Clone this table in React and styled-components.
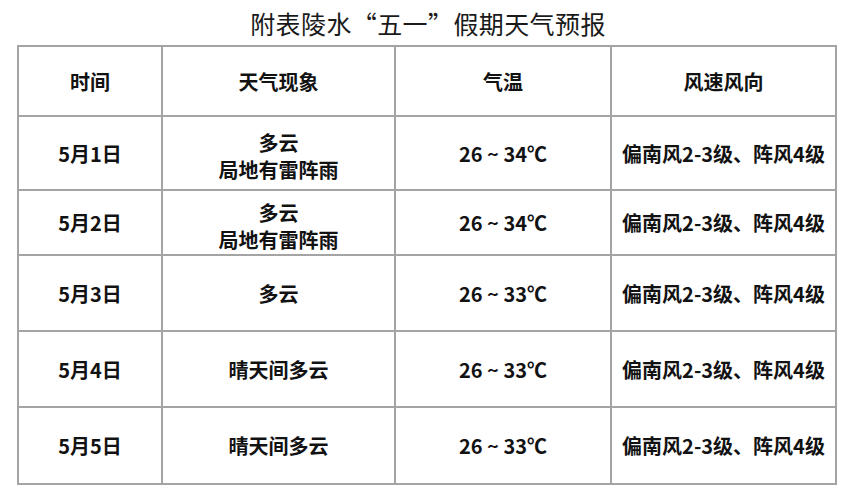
import React from "react";
import styled, { createGlobalStyle } from "styled-components";

const GlobalStyle = createGlobalStyle`
  html, body {
    margin: 0;
    padding: 0;
    background: #ffffff;
  }
  body {
    font-family: "Noto Sans CJK SC", "Noto Sans", sans-serif;
    color: #141414;
  }
`;

const rows = [
  { date: "5月1日", weather: ["多云", "局地有雷阵雨"], temp: "26 ~ 34℃", height: 74 },
  { date: "5月2日", weather: ["多云", "局地有雷阵雨"], temp: "26 ~ 34℃", height: 65 },
  { date: "5月3日", weather: ["多云"], temp: "26 ~ 33℃", height: 76 },
  { date: "5月4日", weather: ["晴天间多云"], temp: "26 ~ 33℃", height: 76 },
  { date: "5月5日", weather: ["晴天间多云"], temp: "26 ~ 33℃", height: 77 },
];

const App = () => {
  return (
    <Page>
      <GlobalStyle />
      <Title>附表陵水“五一”假期天气预报</Title>
      <Table>
        <colgroup>
          <col style={{ width: 144 }} />
          <col style={{ width: 233 }} />
          <col style={{ width: 216 }} />
          <col style={{ width: 225 }} />
        </colgroup>
        <tbody>
          <Row $h={70}>
            <Cell>时间</Cell>
            <Cell>天气现象</Cell>
            <Cell>气温</Cell>
            <Cell>风速风向</Cell>
          </Row>
          {rows.map((r) => (
            <Row key={r.date} $h={r.height}>
              <Cell>{r.date}</Cell>
              <Cell $multi={r.weather.length > 1}>
                {r.weather.map((w) => (
                  <Line key={w}>{w}</Line>
                ))}
              </Cell>
              <Cell>{r.temp}</Cell>
              <Cell>偏南风2-3级、阵风4级</Cell>
            </Row>
          ))}
        </tbody>
      </Table>
    </Page>
  );
};

export default App;

const Page = styled.div`
  width: 854px;
  height: 500px;
  background: #ffffff;
  overflow: hidden;
`;

const Title = styled.div`
  height: 45px;
  display: flex;
  align-items: center;
  justify-content: center;
  padding-left: 2px;
  font-size: 25px;
  font-weight: 400;
  color: #1a1a1a;
  letter-spacing: 0.4px;
`;

const Table = styled.table`
  margin-left: 17px;
  width: 818px;
  border-collapse: collapse;
  table-layout: fixed;
`;

const Row = styled.tr`
  height: ${(p) => p.$h}px;
`;

const Cell = styled.td`
  border: 2px solid #a4a4a4;
  padding: ${(p) => (p.$multi ? "6px 0 0" : "0")};
  text-align: center;
  vertical-align: middle;
  font-size: 20px;
  font-weight: 700;
  line-height: 27px;
  color: #121212;
`;

const Line = styled.div`
  line-height: 27px;
`;
